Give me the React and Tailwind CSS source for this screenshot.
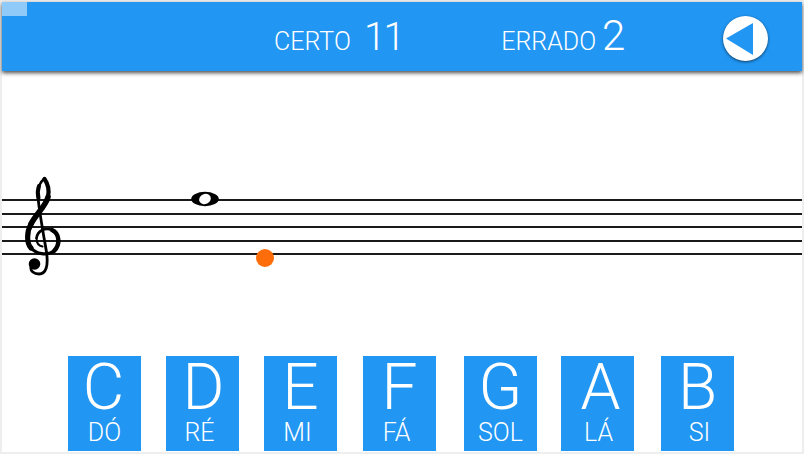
export default function App() {
  const keys = [
    ["C", "DÓ", "ml-[66px]", "pr-[2px]", ""],
    ["D", "RÉ", "ml-[25px]", "pl-[2px]", "pr-[6px]"],
    ["E", "MI", "ml-[25px]", "", "pr-[6px]"],
    ["F", "FÁ", "ml-[26px]", "", "pr-[6px]"],
    ["G", "SOL", "ml-[28px]", "", ""],
    ["A", "LÁ", "ml-[24px]", "pl-[6px]", "pl-[2px]"],
    ["B", "SI", "ml-[27px]", "", "pl-[4px]"],
  ];
  return (
    <div className="w-[804px] h-[454px] overflow-hidden bg-[#eeeeee] pt-[2px] pl-[2px] pr-[2px] pb-[2px] font-['Roboto',sans-serif]">
      <div className="relative w-[800px] h-[450px] bg-white flex flex-col">
        <header className="relative h-[69px] shrink-0 bg-[#2196f3] shadow-[0_2px_4px_rgba(0,0,0,0.7)] flex items-center text-white">
          <div className="absolute left-0 top-0 w-[25px] h-[14px] bg-[#90caf9]" />
          <div className="flex items-baseline ml-[272px] mt-[-1px]">
            <span className="text-[25px] leading-none font-light">CERTO</span>
            <span className="text-[39px] leading-none font-light tracking-[-2px] ml-[13px]">11</span>
            <span className="text-[25px] leading-none font-light ml-[98px]">ERRADO</span>
            <span className="text-[42px] leading-none font-light ml-[6px]">2</span>
          </div>
          <div className="absolute left-[721px] top-[14px] w-[45px] h-[45px] rounded-full bg-white shadow-[0_1px_3px_rgba(0,0,0,0.6)]">
            <svg width="45" height="45" viewBox="0 0 45 45">
              <polygon points="3,22.5 30,7 30,39" fill="#2196f3" />
            </svg>
          </div>
        </header>
        <div className="relative mt-[128px] flex flex-col gap-[11.5px]">
          <div className="h-[2px] bg-[#1a1a1a]" />
          <div className="h-[2px] bg-[#1a1a1a]" />
          <div className="h-[2px] bg-[#1a1a1a]" />
          <div className="h-[2px] bg-[#1a1a1a]" />
          <div className="h-[2px] bg-[#1a1a1a]" />
          <svg className="absolute left-[13px] top-[-24px]" width="60" height="110" viewBox="15 175 60 110" fill="none" stroke="#000" strokeLinecap="round" strokeLinejoin="round">
            <path d="M44.5 178.5 C40 182 37 189 38 197 C39 210 43 232 46.5 252 C48.5 266 46 274 39 274 C34 274 30 271 31 267" strokeWidth="2.8" />
            <path d="M39 186 C37.5 190 37.5 194 38.5 198" strokeWidth="4" />
            <path d="M44.5 179 C48 184 49.5 190 48 197" strokeWidth="4.2" />
            <path d="M48 197 C46 206 36 214 31 224" strokeWidth="5.6" />
            <path d="M31 224 C26.5 232 26.5 243 31 248" strokeWidth="5.2" />
            <path d="M31 248 C36 254 47 256 54 251" strokeWidth="3.2" />
            <path d="M54 251 C61 244 59 233 52 230" strokeWidth="4.4" />
            <path d="M52 230 C45 227 37.5 231 36.5 238" strokeWidth="2.6" />
            <path d="M36.5 238 C36.5 243 39 246 42.5 246.5" strokeWidth="2" />
            <circle cx="34.5" cy="264" r="5.8" fill="#000" stroke="none" />
          </svg>
          <svg className="absolute left-[188px] top-[-9px]" width="30" height="18" viewBox="0 0 30 18">
            <ellipse cx="15" cy="9" rx="13.8" ry="7.2" fill="#000" />
            <ellipse cx="15" cy="9" rx="6" ry="5" fill="#fff" transform="rotate(-25 15 9)" />
          </svg>
          <div className="absolute left-[254px] top-[50px] w-[18px] h-[18px] rounded-full bg-[#ff6d0a]" />
        </div>
        <div className="mt-[101px] flex">
          {keys.map(([note, name, margin, noteShift, nameShift]) => (
            <div key={note} className={`w-[73px] h-[95px] bg-[#2196f3] text-white flex flex-col items-center ${margin}`}>
              <span className={`text-[64px] leading-[58px] font-light mt-[3px] ${noteShift}`}>{note}</span>
              <span className={`text-[25px] leading-[26px] font-light mt-[3px] ${nameShift}`}>{name}</span>
            </div>
          ))}
        </div>
      </div>
    </div>
  );
}
